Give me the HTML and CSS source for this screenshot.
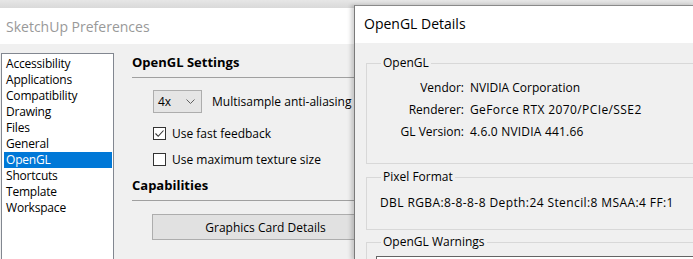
FILE: index.html
```html
<!DOCTYPE html>
<html lang="en">
<head>
    <meta charset="UTF-8">
    <title>SketchUp Preferences</title>
    <link rel="stylesheet" href="styles.css">
</head>
<body>
    <div class="desktop">
        <div class="window prefs">
            <div class="title-bar">SketchUp Preferences</div>
            <div class="prefs-body">
                <ul class="pref-list">
                    <li>Accessibility</li>
                    <li>Applications</li>
                    <li>Compatibility</li>
                    <li>Drawing</li>
                    <li>Files</li>
                    <li>General</li>
                    <li class="selected">OpenGL</li>
                    <li>Shortcuts</li>
                    <li>Template</li>
                    <li>Workspace</li>
                </ul>
                <div class="pref-panel">
                    <h2>OpenGL Settings</h2>
                    <div class="option-row">
                        <div class="combo">
                            <span>4x</span>
                            <svg width="9" height="5" viewBox="0 0 9 5"><path d="M0.5 0.5 L4.5 4.5 L8.5 0.5" fill="none" stroke="#606060" stroke-width="1"/></svg>
                        </div>
                        <span>Multisample anti-aliasing</span>
                    </div>
                    <div class="option-row check-row">
                        <span class="checkbox">
                            <svg width="11" height="11" viewBox="0 0 11 11"><path d="M1.5 5.5 L4.2 8.3 L9.5 2.5" fill="none" stroke="#333" stroke-width="1.1"/></svg>
                        </span>
                        <span>Use fast feedback</span>
                    </div>
                    <div class="option-row check-row">
                        <span class="checkbox"></span>
                        <span>Use maximum texture size</span>
                    </div>
                    <h2>Capabilities</h2>
                    <button class="details-button">Graphics Card Details</button>
                </div>
            </div>
        </div>

        <div class="window details">
            <div class="title-bar">OpenGL Details</div>
            <div class="details-body">
                <fieldset class="group group-gl">
                    <legend>OpenGL</legend>
                    <div class="info-grid">
                        <span class="key">Vendor:</span><span>NVIDIA Corporation</span>
                        <span class="key">Renderer:</span><span class="wide">GeForce RTX 2070/PCIe/SSE2</span>
                        <span class="key">GL Version:</span><span class="num">4.6.0 NVIDIA 441.66</span>
                    </div>
                </fieldset>
                <fieldset class="group group-pixel">
                    <legend>Pixel Format</legend>
                    <div class="pixel-text">DBL RGBA:8-8-8-8 Depth:24 Stencil:8 MSAA:4 FF:1</div>
                </fieldset>
                <fieldset class="group group-warn">
                    <legend>OpenGL Warnings</legend>
                    <div class="warn-box"></div>
                </fieldset>
            </div>
        </div>
    </div>
</body>
</html>
```

FILE: styles.css
```css
body {
    margin: 0;
    font-family: "Open Sans", "Noto Sans", sans-serif;
    font-size: 12px;
    color: #000;
    background-color: #ececec;
    overflow: hidden;
}
.desktop {
    display: flex;
    align-items: flex-start;
    width: 693px;
    height: 259px;
    overflow: hidden;
    background: linear-gradient(#e6e6e6, #d9d9d9 8px);
}
.window {
    background-color: #f0f0f0;
}
.title-bar {
    background-color: #fff;
    font-size: 14px;
}
.prefs {
    width: 354px;
    flex: none;
    margin-top: 8px;
    height: 251px;
}
.prefs .title-bar {
    height: 36px;
    line-height: 37px;
    padding-left: 6px;
    color: #999;
}
.prefs-body {
    display: flex;
    padding-top: 9px;
}
.pref-list {
    flex: none;
    list-style: none;
    margin: 0 0 0 1px;
    padding: 2px 1px 0 2px;
    width: 108px;
    height: 220px;
    background-color: #fff;
    border: 1px solid #828790;
}
.pref-list li {
    height: 16px;
    line-height: 16px;
    padding-left: 2px;
    letter-spacing: -0.2px;
}
.pref-list li.selected {
    background-color: #0078d7;
    color: #fff;
}
.pref-panel {
    flex: 1;
    padding-left: 18px;
}
h2 {
    margin: 0;
    font-size: 13px;
    font-weight: bold;
    line-height: 18px;
    padding-bottom: 6px;
    border-bottom: 1px solid #a0a0a0;
}
.option-row {
    display: flex;
    align-items: center;
    gap: 10px;
    padding-left: 21px;
    margin-top: 11px;
    height: 24px;
}
.combo {
    display: flex;
    align-items: center;
    justify-content: space-between;
    box-sizing: border-box;
    width: 49px;
    height: 23px;
    padding: 0 6px 0 4px;
    background-color: #e5e5e5;
    border: 1px solid #adadad;
}
.check-row {
    gap: 6px;
    margin-top: 8px;
}
.check-row + .check-row {
    margin-top: 2px;
}
.checkbox {
    box-sizing: border-box;
    width: 13px;
    height: 13px;
    background-color: #fff;
    border: 1px solid #333;
    display: flex;
    align-items: center;
    justify-content: center;
}
.check-row + h2 {
    margin-top: 5px;
}
.details-button {
    display: block;
    box-sizing: border-box;
    margin: 13px 0 0 20px;
    width: 220px;
    height: 26px;
    background-color: #e1e1e1;
    border: 1px solid #adadad;
    border-right: none;
    font-family: inherit;
    font-size: 12px;
    color: #000;
    padding: 0 0 0 6px;
}
.details {
    flex: none;
    width: 340px;
    height: 254px;
    margin-top: 5px;
    border-left: 1px solid #7a7a7a;
    border-top: 1px solid #8a8a8a;
    box-shadow: -3px 0 4px rgba(0, 0, 0, 0.18);
}
.details .title-bar {
    height: 37px;
    line-height: 36px;
    padding-left: 9px;
}
.details-body {
    padding-top: 12px;
}
.group {
    margin: 0 0 0 11px;
    padding: 0 0 0 8px;
    border: 1px solid #d8d8d8;
    border-right: none;
    width: 340px;
}
.group legend {
    padding: 0 2px;
    margin-left: 6px;
    line-height: 16px;
}
.info-grid {
    display: grid;
    grid-template-columns: 89px auto;
    column-gap: 6px;
    row-gap: 6px;
    padding-top: 9px;
    padding-bottom: 23px;
    line-height: 16px;
}
.key {
    text-align: right;
}
.wide {
    letter-spacing: 0.4px;
}
.num {
    letter-spacing: 0.2px;
}
.group-pixel {
    margin-top: 5px;
}
.pixel-text {
    padding: 10px 0 18px 5px;
    line-height: 16px;
    letter-spacing: 0.4px;
}
.group-warn {
    margin-top: 4px;
    height: 40px;
}
.warn-box {
    margin-top: 6px;
    margin-left: 1px;
    height: 30px;
    background-color: #fff;
    border: 1px solid #646464;
}
```
